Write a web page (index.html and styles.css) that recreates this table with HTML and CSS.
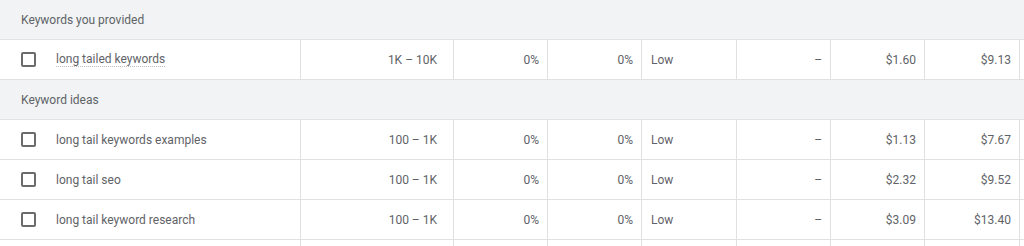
FILE: index.html
```html
<!DOCTYPE html>
<html lang="en">
<head>
<meta charset="utf-8">
<title>Keyword ideas</title>
<link rel="stylesheet" href="styles.css">
</head>
<body>
<div class="table">
  <div class="group">Keywords you provided</div>
  <div class="row">
    <div class="cell kw"><span class="cb"></span><span class="kw-text dotted">long tailed keywords</span></div>
    <div class="cell num vol">1K – 10K</div>
    <div class="cell num">0%</div>
    <div class="cell num">0%</div>
    <div class="cell txt">Low</div>
    <div class="cell num">–</div>
    <div class="cell num">$1.60</div>
    <div class="cell num">$9.13</div>
    <div class="cell"></div>
  </div>
  <div class="group">Keyword ideas</div>
  <div class="row">
    <div class="cell kw"><span class="cb"></span><span class="kw-text">long tail keywords examples</span></div>
    <div class="cell num vol">100 – 1K</div>
    <div class="cell num">0%</div>
    <div class="cell num">0%</div>
    <div class="cell txt">Low</div>
    <div class="cell num">–</div>
    <div class="cell num">$1.13</div>
    <div class="cell num">$7.67</div>
    <div class="cell"></div>
  </div>
  <div class="row">
    <div class="cell kw"><span class="cb"></span><span class="kw-text">long tail seo</span></div>
    <div class="cell num vol">100 – 1K</div>
    <div class="cell num">0%</div>
    <div class="cell num">0%</div>
    <div class="cell txt">Low</div>
    <div class="cell num">–</div>
    <div class="cell num">$2.32</div>
    <div class="cell num">$9.52</div>
    <div class="cell"></div>
  </div>
  <div class="row">
    <div class="cell kw"><span class="cb"></span><span class="kw-text">long tail keyword research</span></div>
    <div class="cell num vol">100 – 1K</div>
    <div class="cell num">0%</div>
    <div class="cell num">0%</div>
    <div class="cell txt">Low</div>
    <div class="cell num">–</div>
    <div class="cell num">$3.09</div>
    <div class="cell num">$13.40</div>
    <div class="cell"></div>
  </div>
  <div class="row row-tail">
    <div class="cell kw"></div>
    <div class="cell"></div>
    <div class="cell"></div>
    <div class="cell"></div>
    <div class="cell"></div>
    <div class="cell"></div>
    <div class="cell"></div>
    <div class="cell"></div>
    <div class="cell"></div>
  </div>
</div>
</body>
</html>
```
FILE: styles.css
```css
html, body {
  margin: 0;
  padding: 0;
  background: #ffffff;
}
body {
  font-family: Roboto, "Liberation Sans", Arial, sans-serif;
  font-size: 12px;
  color: #5f6368;
  height: 246px;
  overflow: hidden;
}
.table {
  display: flex;
  flex-direction: column;
  width: 1024px;
}
.group {
  height: 40px;
  box-sizing: border-box;
  background: #f1f3f4;
  border-bottom: 1px solid #e3e3e3;
  padding-left: 21px;
  display: flex;
  align-items: center;
  color: #5f6368;
}
.row {
  height: 40px;
  box-sizing: border-box;
  border-bottom: 1px solid #e0e0e0;
  display: grid;
  grid-template-columns: 300px 153px 94px 94px 95px 94px 94px 95px 1fr;
  background: #ffffff;
}
.row-tail {
  height: 6px;
  border-bottom: none;
}
.cell {
  display: flex;
  align-items: center;
  border-left: 1px solid #e0e0e0;
  padding: 0 8px 0 0;
  min-width: 0;
}
.cell.kw {
  border-left: none;
  padding-left: 21px;
}
.cell.num {
  justify-content: flex-end;
}
.cell.vol {
  padding-right: 16px;
}
.cell.txt {
  padding-left: 9px;
}
.cb {
  width: 15px;
  height: 15px;
  box-sizing: border-box;
  border: 2px solid #6b6b6b;
  border-radius: 2px;
  flex: none;
}
.kw-text {
  margin-left: 20px;
}
.dotted {
  border-bottom: 1px dotted #bdbdbd;
  line-height: 14px;
}
```
